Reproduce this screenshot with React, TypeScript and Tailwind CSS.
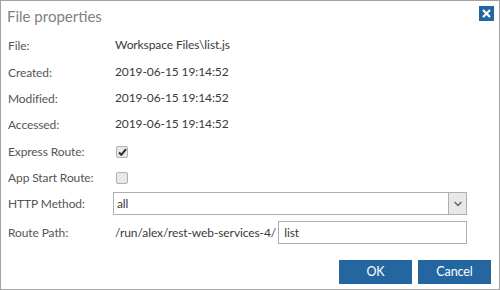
import { ChevronDown } from 'lucide-react'

const rows = [
  { label: 'File:', value: 'Workspace Files\\list.js' },
  { label: 'Created:', value: '2019-06-15 19:14:52' },
  { label: 'Modified:', value: '2019-06-15 19:14:52' },
  { label: 'Accessed:', value: '2019-06-15 19:14:52' },
]

function Checkbox({ checked }: { checked?: boolean }) {
  return (
    <div className="w-[12px] h-[12px] ml-[1px] rounded-[2px] border border-[#adb1b5] bg-[#e9e9e9] flex items-center justify-center">
      {checked && (
        <svg width="9" height="8" viewBox="0 0 9 8">
          <path d="M1 4.5 L3.3 6.8 L8 1.2" fill="none" stroke="#2a2a2a" strokeWidth="2" />
        </svg>
      )}
    </div>
  )
}

function Row({ label, children }: { label: string; children: React.ReactNode }) {
  return (
    <div className="flex items-center h-[26.4px]">
      <div className="w-[107px] shrink-0 text-[#555]">{label}</div>
      <div className="flex items-center text-[#3a3a3a]">{children}</div>
    </div>
  )
}

export default function App() {
  return (
    <div
      className="w-[500px] h-[290px] border border-[#a3a3a3] bg-white flex flex-col text-[12px] tracking-[-0.1px]"
      style={{ fontFamily: 'Lato, "Open Sans", sans-serif' }}
    >
      {/* Header */}
      <div className="h-[32px] flex items-start justify-between pl-[6px] pr-[5px]">
        <span className="text-[15px] text-[#808080] mt-[4px] tracking-normal">File properties</span>
        <button className="w-[15px] h-[15px] mt-[5px] bg-[#2467a0] flex items-center justify-center">
          <svg width="9" height="9" viewBox="0 0 9 9">
            <path d="M1 1 L8 8 M8 1 L1 8" stroke="white" strokeWidth="2.2" />
          </svg>
        </button>
      </div>

      {/* Body */}
      <div className="flex flex-col pl-[7px] pr-[32px]">
        {rows.map((r) => (
          <Row key={r.label} label={r.label}>
            <span className="-mt-[2px]">{r.value}</span>
          </Row>
        ))}
        <Row label="Express Route:">
          <Checkbox checked />
        </Row>
        <Row label="App Start Route:">
          <Checkbox />
        </Row>

        <div className="flex items-center h-[23px] mt-[1px]">
          <div className="w-[105px] shrink-0 text-[#555]">HTTP Method:</div>
          <div className="flex-1 h-full flex border border-[#a9afb4] bg-white">
            <span className="flex-1 pl-[3px] flex items-center text-[#3a3a3a]">all</span>
            <div className="w-[18px] h-full bg-[#e8e8e8] border-l border-[#a9afb4] flex items-center justify-center">
              <ChevronDown className="w-[12px] h-[12px] text-[#707070]" strokeWidth={3.5} />
            </div>
          </div>
        </div>

        <div className="flex items-center h-[23px] mt-[6px]">
          <div className="w-[107px] shrink-0 text-[#555]">Route Path:</div>
          <span className="text-[#3a3a3a] mr-[2px]">/run/alex/rest-web-services-4/</span>
          <div className="flex-1 h-full border border-[#a9afb4] flex items-center pl-[5px] text-[#3a3a3a]">list</div>
        </div>
      </div>

      {/* Footer */}
      <div className="flex justify-end gap-[6px] pr-[8px] mt-[16px]">
        <button className="w-[73px] h-[24px] bg-[#2467a0] text-white text-[12.5px]">OK</button>
        <button className="w-[73px] h-[24px] bg-[#2467a0] text-white text-[12.5px]">Cancel</button>
      </div>
    </div>
  )
}
